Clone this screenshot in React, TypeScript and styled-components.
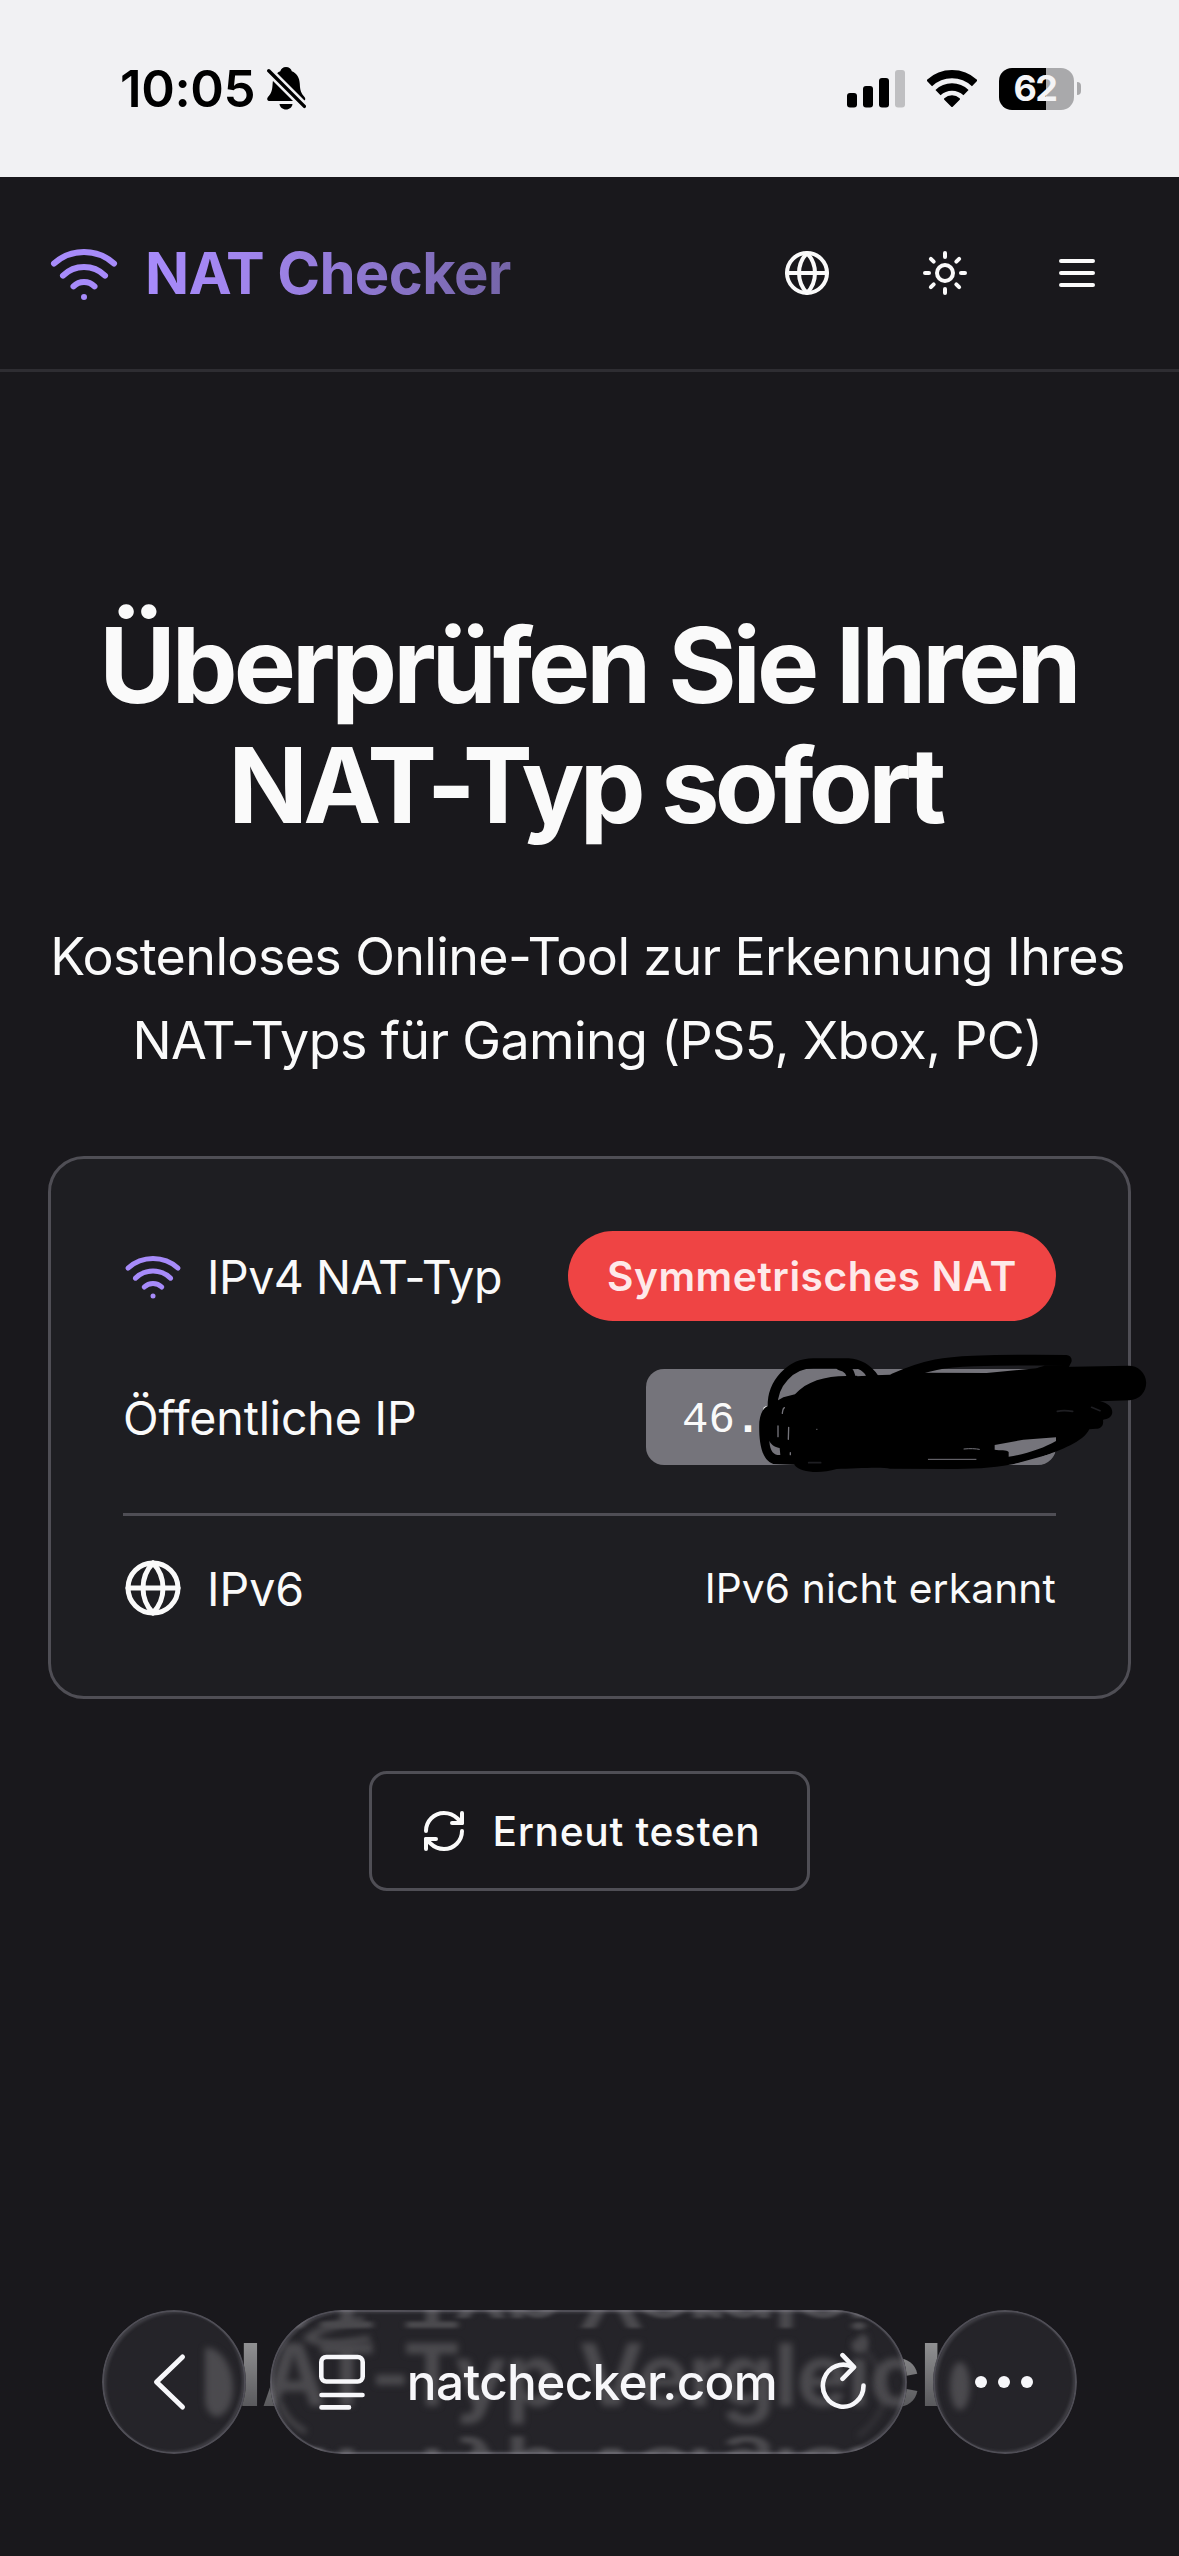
import React from 'react';
import styled, { createGlobalStyle, css } from 'styled-components';
import { Globe, RefreshCw, Sun, Wifi } from 'lucide-react';

const colors = {
  page: '#19181c',
  card: '#1e1e22',
  line: '#4f4e55',
  headerLine: '#2e2d32',
  text: '#fafafa',
  violet: '#a78bfa',
  danger: '#ef4444',
  chip: '#75747b',
  glass: '#252429',
  echo: '#4b4a4e',
};

const GlobalStyle = createGlobalStyle`
  *, *::before, *::after { box-sizing: border-box; }
  body {
    margin: 0;
    background: ${colors.page};
    color: ${colors.text};
    font-family: Inter, 'Liberation Sans', sans-serif;
    -webkit-font-smoothing: antialiased;
  }
  svg { display: block; flex: none; }
`;

const Screen = styled.div`
  position: relative;
  width: 1179px;
  height: 2556px;
  overflow: hidden;
  display: flex;
  flex-direction: column;
`;

/* ---------- status bar ---------- */

const StatusBar = styled.div`
  flex: none;
  height: 177px;
  padding: 0 98px 0 120px;
  background: #f1f1f3;
  color: #000;
  display: flex;
  align-items: center;
  justify-content: space-between;
`;

const StatusGroup = styled.div<{ $gap: number }>`
  display: flex;
  align-items: center;
  gap: ${(p) => p.$gap}px;
`;

const Clock = styled.span`
  font-size: 51px;
  font-weight: 600;
  line-height: 60px;
  letter-spacing: -0.4px;
`;

const Battery = styled.div`
  display: flex;
  align-items: center;
  gap: 3px;
`;

const BatteryBody = styled.div`
  width: 75px;
  height: 42px;
  border-radius: 13px;
  background: linear-gradient(90deg, #000 47px, #a9a9ab 47px);
  color: #f4f4f6;
  font-size: 36px;
  font-weight: 700;
  line-height: 41px;
  letter-spacing: -1.6px;
  text-align: center;
  padding-right: 3px;
`;

const BatteryNub = styled.div`
  width: 4px;
  height: 13px;
  border-radius: 0 6px 6px 0;
  background: #a9a9ab;
`;

/* ---------- header ---------- */

const Header = styled.header`
  flex: none;
  height: 195px;
  padding: 0 48px;
  border-bottom: 3px solid ${colors.headerLine};
  display: flex;
  align-items: center;
  justify-content: space-between;
`;

const Brand = styled.div`
  display: flex;
  align-items: center;
  gap: 25px;
  color: ${colors.violet};
`;

const BrandName = styled.span`
  font-size: 58px;
  font-weight: 700;
  line-height: 72px;
  letter-spacing: -0.66px;
  background: linear-gradient(90deg, #a78bfa 0%, #a084ec 30%, #7565a8 100%);
  -webkit-background-clip: text;
  background-clip: text;
  color: transparent;
`;

const HeaderActions = styled.nav`
  display: flex;
  gap: 24px;
`;

const IconButton = styled.button<{ $width?: number }>`
  width: ${(p) => p.$width ?? 108}px;
  height: 108px;
  padding: 0;
  border: 0;
  background: none;
  color: inherit;
  display: flex;
  align-items: center;
  justify-content: center;
`;

/* ---------- hero ---------- */

const Main = styled.main`
  display: flex;
  flex-direction: column;
  align-items: center;
  padding: 233px 48px 0;
`;

const Title = styled.h1`
  margin: 0;
  font-size: 104.5px;
  font-weight: 700;
  line-height: 120px;
  text-align: center;
  white-space: nowrap;
`;

const TitleLine = styled.span<{ $tracking: number }>`
  display: block;
  letter-spacing: ${(p) => p.$tracking}px;
  padding-right: ${(p) => (p.$tracking < -4.5 ? 9 : 2)}px;
`;

const Lead = styled.p`
  margin: 70px 0 0;
  padding-right: 4px;
  width: 1083px;
  font-size: 52px;
  line-height: 84px;
  letter-spacing: -0.64px;
  text-align: center;
  white-space: nowrap;
`;

/* ---------- result card ---------- */

const Card = styled.section`
  width: 1083px;
  margin-top: 73px;
  padding: 72px;
  border: 3px solid ${colors.line};
  border-radius: 36px;
  background: ${colors.card};
  display: flex;
  flex-direction: column;
  gap: 48px;
`;

const Row = styled.div<{ $divided?: boolean }>`
  display: flex;
  align-items: center;
  justify-content: space-between;
  ${(p) =>
    p.$divided &&
    css`
      border-top: 3px solid ${colors.line};
      padding-top: 36px;
    `}
`;

const Label = styled.div<{ $tracking?: number }>`
  display: flex;
  align-items: center;
  gap: 24px;
  font-size: 46.5px;
  line-height: 70px;
  letter-spacing: ${(p) => p.$tracking ?? 0}px;
`;

const LabelText = styled.span`
  padding-top: 2px;
`;

const VioletWifi = styled(Wifi)`
  color: ${colors.violet};
`;

const Badge = styled.span`
  height: 90px;
  padding: 0 39px;
  border-radius: 45px;
  background: ${colors.danger};
  color: #fee9e9;
  font-size: 40.7px;
  font-weight: 600;
  line-height: 91px;
  letter-spacing: 0.55px;
`;

const Address = styled.div`
  position: relative;
  width: 410px;
  height: 96px;
  padding: 3px 0 0 36px;
  border-radius: 18px;
  background: ${colors.chip};
  font-family: 'Liberation Mono', monospace;
  font-size: 44px;
  line-height: 96px;
`;

const Dot = styled.b`
  font-weight: 700;
`;

const Scribble = styled.svg`
  position: absolute;
  left: 94px;
  top: -29px;
`;

const Note = styled.span`
  font-size: 40.7px;
  letter-spacing: 0.15px;
`;

const RetryButton = styled.button`
  width: 441px;
  height: 120px;
  margin-top: 72px;
  padding: 0 0 0 2px;
  border: 3px solid ${colors.line};
  border-radius: 18px;
  background: none;
  color: inherit;
  font-family: inherit;
  font-size: 40.7px;
  font-weight: 500;
  letter-spacing: 0.66px;
  display: flex;
  align-items: center;
  justify-content: center;
  gap: 24px;
`;

const SectionTitle = styled.h2`
  margin: 430px 10px 0 0;
  font-size: 87px;
  font-weight: 700;
  line-height: 108px;
  letter-spacing: -1.15px;
  white-space: nowrap;
  background: linear-gradient(180deg, #929294 20px, #57575a 88px);
  -webkit-background-clip: text;
  background-clip: text;
  color: transparent;
`;

/* ---------- browser toolbar ---------- */

const Toolbar = styled.div`
  position: absolute;
  left: 0;
  right: 0;
  bottom: 0;
  height: 246px;
  padding-left: 102px;
  display: flex;
  align-items: flex-start;
`;

const glass = css`
  position: relative;
  height: 144px;
  border-radius: 72px;
  background: ${colors.glass};
  overflow: hidden;
  display: flex;
  align-items: center;

  &::after {
    content: '';
    position: absolute;
    inset: 0;
    border-radius: 72px;
    border: 2px solid rgba(150, 148, 160, 0.38);
    box-shadow: inset 3px 2px 3px -1px rgba(160, 158, 170, 0.22), inset -3px -2px 3px -1px rgba(160, 158, 170, 0.22);
  }
`;

const RoundButton = styled.div`
  ${glass}
  flex: none;
  width: 144px;
  justify-content: center;
`;

const AddressBar = styled.div`
  ${glass}
  flex: none;
  width: 637px;
  margin: 0 26px 0 24px;
  padding: 0 40px 0 49px;
  justify-content: space-between;
`;

const Echo = styled.div<{ $flip?: 'top' | 'bottom' }>`
  position: absolute;
  inset: 0;
  transform-origin: 0 0;
  filter: blur(3px);
  ${(p) => p.$flip === 'top' && css`transform: matrix(1, 0, 0, -0.6, 0, 37.4);`}
  ${(p) => p.$flip === 'bottom' && css`transform: matrix(1, 0, 0, -0.64, 0, 199);`}

  &::before {
    content: 'NAT-Typ Vergleich';
    position: absolute;
    left: -73.5px;
    top: 11px;
    font-size: 87px;
    font-weight: 700;
    line-height: 108px;
    letter-spacing: -1.15px;
    white-space: nowrap;
    color: ${colors.echo};
  }
`;

const Refraction = styled.svg`
  position: absolute;
  inset: 0;
  filter: blur(3px);
`;

const Domain = styled.span`
  position: relative;
  font-size: 49.5px;
  font-weight: 500;
  letter-spacing: -0.65px;
  color: #f7f7fa;
`;

const Glyph = styled.svg`
  position: relative;
`;

const Bell = () => (
  <svg width="39" height="43" viewBox="0 0 39 43">
    <path d="M19 0c3 0 5.2 1.8 5.8 4.200 5 2 7.700 6.300 8 12.800.2 6 1.200 9 4.700 13 1.500 2 .8 4-2 4H3c-3 0-3.500-2.300-2-4 3.500-4 4.300-7 4.600-13C6 10.500 8.500 6.200 13.300 4.200 14 1.800 16 0 19 0Z" />
    <path d="M12.500 37h13c-.5 3.200-3 5.500-6.500 5.500s-6-2.300-6.500-5.500Z" />
    <path d="M0 2 39 41" stroke="#f1f1f3" strokeWidth="8.500" />
    <path d="M1.800 3.800 37.400 39.400" stroke="#000" strokeWidth="3.400" strokeLinecap="round" />
  </svg>
);

const Signal = () => (
  <svg width="58" height="38" viewBox="0 0 58 38">
    <rect x="0" y="23" width="10" height="14.500" rx="3" />
    <rect x="16" y="16" width="10" height="21.500" rx="3" />
    <rect x="32" y="8" width="10" height="29.500" rx="3" />
    <rect x="48" y="0" width="10" height="37.500" rx="3" fill="#bfbfc1" />
  </svg>
);

const StatusWifi = () => (
  <svg width="50" height="38" viewBox="0 0 50 38" fill="none" stroke="#000">
    <path d="M2.200 13.300a33 33 0 0 1 45.600 0" strokeWidth="8.200" />
    <path d="M11 22.600a20.300 20.300 0 0 1 28 0" strokeWidth="7.400" />
    <path d="M25 36 18 29a10.500 10.500 0 0 1 14 0Z" fill="#000" strokeWidth="2" strokeLinejoin="round" />
  </svg>
);

const MenuIcon = () => (
  <svg width="48" height="48" viewBox="0 0 24 24" stroke="currentColor" strokeWidth="2" strokeLinecap="round">
    <path d="M4 6h16M4 12h16M4 18h16" />
  </svg>
);

const Redaction = () => (
  <Scribble width="420" height="150" viewBox="0 0 1260 450" fill="none" strokeLinecap="round" strokeLinejoin="round">
    <circle cx="82" cy="211" r="13" fill="#fff" />
    <path
      fill="#000"
      fillRule="evenodd"
      d="M130 172 165 163C200 122 262 106 330 108L450 104 560 98 740 99 920 82 1165 77A52 52 0 0 1 1168 181L1080 184C1108 190 1120 206 1116 222 1110 238 1096 236 1089 240 1092 260 1080 266 1068 266L1048 268C1030 306 962 330 905 351 835 375 740 388 640 387L450 386C425 380 340 386 290 387 240 402 180 398 163 374L100 372C60 360 56 290 58 245 62 215 72 202 84 198ZM764 315 850 299 948 292V303C912 324 860 342 806 350V336C800 328 780 332 764 329Z"
    />
    <path stroke="#000" strokeWidth="30" d="M98 200C96 130 152 70 220 70H325C360 72 386 92 402 115" />
    <path stroke="#000" strokeWidth="26" d="M300 78C325 84 332 98 334 116" />
    <path stroke="#000" strokeWidth="32" d="M462 116C560 72 620 66 700 63 800 60 900 60 979 61L970 78 900 98" />
    <path fill={colors.chip} d="M341 88 354 87C366 92 374 99 378 107L352 109C352 100 348 94 341 88Z" />
    <path fill={colors.chip} d="M88 302C94 316 108 322 119 324L121 345C104 346 90 338 88 302Z" />
    <path stroke={colors.chip} strokeWidth="4" d="M114 258V290M146 262 145 298M133 203C127 207 128 214 127 220M151 338V344" />
    <path stroke={colors.chip} strokeWidth="3" d="M672 327C690 325 708 326 718 328M565 358H708" />
    <path stroke={colors.card} strokeWidth="5" d="M206 368H242M952 214C970 210 985 212 998 214M1055 202 1080 212" />
    <path stroke={colors.chip} strokeWidth="3" d="M230 268h1" />
    <path fill={colors.chip} d="M905 373C925 366 938 354 945 338L820 373Z" />
  </Scribble>
);

export default function App() {
  return (
    <>
      <GlobalStyle />
      <Screen>
        <StatusBar>
          <StatusGroup $gap={12}>
            <Clock>10:05</Clock>
            <Bell />
          </StatusGroup>
          <StatusGroup $gap={22}>
            <Signal />
            <StatusWifi />
            <Battery>
              <BatteryBody>62</BatteryBody>
              <BatteryNub />
            </Battery>
          </StatusGroup>
        </StatusBar>

        <Header>
          <Brand>
            <Wifi size={72} />
            <BrandName>NAT Checker</BrandName>
          </Brand>
          <HeaderActions>
            <IconButton $width={120} aria-label="Sprache">
              <Globe size={48} />
            </IconButton>
            <IconButton aria-label="Design">
              <Sun size={48} />
            </IconButton>
            <IconButton aria-label="Menü">
              <MenuIcon />
            </IconButton>
          </HeaderActions>
        </Header>

        <Main>
          <Title>
            <TitleLine $tracking={-4}>Überprüfen Sie Ihren</TitleLine>
            <TitleLine $tracking={-4.7}>NAT-Typ sofort</TitleLine>
          </Title>
          <Lead>
            Kostenloses Online-Tool zur Erkennung Ihres
            <br />
            NAT-Typs für Gaming (PS5, Xbox, PC)
          </Lead>

          <Card>
            <Row>
              <Label $tracking={-0.5}>
                <VioletWifi size={60} />
                <LabelText>IPv4 NAT-Typ</LabelText>
              </Label>
              <Badge>Symmetrisches NAT</Badge>
            </Row>
            <Row>
              <Label $tracking={-0.15}>
                <LabelText>Öffentliche IP</LabelText>
              </Label>
              <Address>
                46<Dot>.</Dot>
                <Redaction />
              </Address>
            </Row>
            <Row $divided>
              <Label>
                <Globe size={60} />
                <LabelText>IPv6</LabelText>
              </Label>
              <Note>IPv6 nicht erkannt</Note>
            </Row>
          </Card>

          <RetryButton>
            <RefreshCw size={48} />
            Erneut testen
          </RetryButton>

          <SectionTitle>NAT-Typ Vergleich</SectionTitle>
        </Main>

        <Toolbar>
          <RoundButton>
            <Refraction width="144" height="144" viewBox="0 0 144 144">
              <path d="M103 38C116 36 131 54 131 78 131 96 124 104 115 107 108 106 103 98 103 90Z" fill={colors.echo} />
            </Refraction>
            <Glyph width="144" height="144" viewBox="0 0 144 144" fill="none" stroke="#f7f7fa" strokeWidth="5" strokeLinecap="round" strokeLinejoin="round">
              <path d="M80.500 47 54.500 72 80.500 97" />
            </Glyph>
          </RoundButton>

          <AddressBar>
            <Echo />
            <Echo $flip="top" />
            <Echo $flip="bottom" />
            <Refraction width="637" height="144" viewBox="0 0 637 144" fill="none" stroke={colors.echo} strokeWidth="7">
              <path d="M94 10C60 14 42 24 38 28 58 38 76 32 100 29" />
              <path d="M10 92C14 106 22 114 36 122" strokeWidth="5" />
              <path d="M582 32C600 40 614 62 616 84 612 104 602 116 588 126" strokeWidth="3" opacity="0.7" />
              <ellipse cx="593" cy="32" rx="5" ry="8" fill={colors.echo} stroke="none" />
            </Refraction>
            <Glyph width="46" height="56" viewBox="0 0 46 56" fill="none" stroke="#f7f7fa" strokeWidth="4.600" strokeLinecap="round">
              <rect x="2.300" y="3" width="41.400" height="24.500" rx="5" />
              <path d="M2.500 41H43.500M2.500 53.400H30" />
            </Glyph>
            <Domain>natchecker.com</Domain>
            <Glyph width="48" height="60" viewBox="0 0 48 60" fill="none" stroke="#f7f7fa" strokeWidth="4.600" strokeLinecap="round" strokeLinejoin="round">
              <path d="M44.500 33.500A20.300 21 0 1 1 34 15.300" />
              <path d="M23.500 3.200 35 15.200 23.500 26.800" />
            </Glyph>
          </AddressBar>

          <RoundButton>
            <Refraction width="144" height="144" viewBox="0 0 144 144">
              <ellipse cx="27" cy="76" rx="10" ry="24" fill={colors.echo} />
            </Refraction>
            <Glyph width="144" height="144" viewBox="0 0 144 144" fill="#f7f7fa">
              <circle cx="48" cy="72" r="6" />
              <circle cx="71" cy="72" r="6" />
              <circle cx="94" cy="72" r="6" />
            </Glyph>
          </RoundButton>
        </Toolbar>
      </Screen>
    </>
  );
}
